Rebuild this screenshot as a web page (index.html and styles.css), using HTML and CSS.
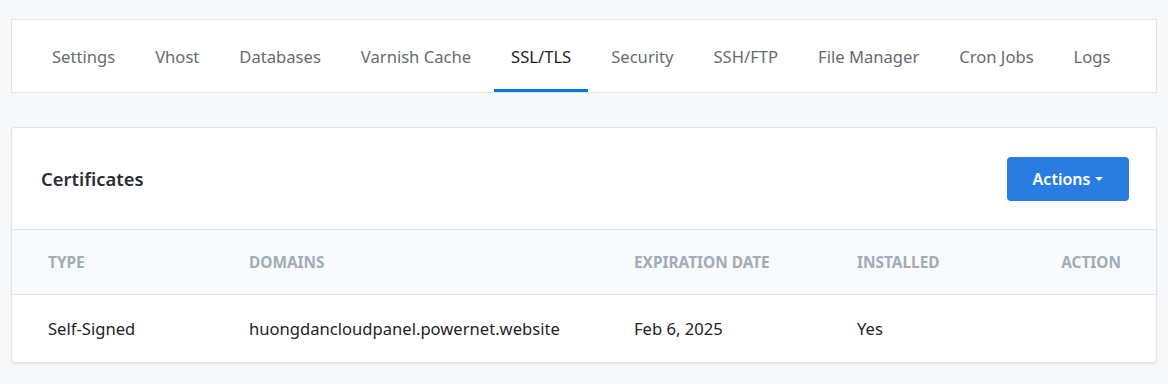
FILE: index.html
```html
<!DOCTYPE html>
<html lang="en">
<head>
    <meta charset="UTF-8">
    <title>Site - SSL/TLS</title>
    <link rel="stylesheet" href="styles.css">
</head>
<body>

    <!-- Site tabs -->
    <nav class="tabs">
        <a class="tab">Settings</a>
        <a class="tab">Vhost</a>
        <a class="tab">Databases</a>
        <a class="tab">Varnish Cache</a>
        <a class="tab active">SSL/TLS</a>
        <a class="tab">Security</a>
        <a class="tab">SSH/FTP</a>
        <a class="tab">File Manager</a>
        <a class="tab">Cron Jobs</a>
        <a class="tab">Logs</a>
    </nav>

    <!-- Certificates card -->
    <div class="card">
        <div class="card-header">
            <h2>Certificates</h2>
            <button class="btn-actions">Actions <span class="caret"></span></button>
        </div>

        <table class="cert-table">
            <colgroup>
                <col style="width: 201px">
                <col style="width: 385px">
                <col style="width: 223px">
                <col style="width: 180px">
                <col>
            </colgroup>
            <thead>
                <tr>
                    <th>Type</th>
                    <th>Domains</th>
                    <th>Expiration Date</th>
                    <th>Installed</th>
                    <th class="right">Action</th>
                </tr>
            </thead>
            <tbody>
                <tr>
                    <td>Self-Signed</td>
                    <td>huongdancloudpanel.powernet.website</td>
                    <td>Feb 6, 2025</td>
                    <td>Yes</td>
                    <td class="right"></td>
                </tr>
            </tbody>
        </table>
    </div>

</body>
</html>
```

FILE: styles.css
```css
/* Global Styles */
* {
    margin: 0;
    padding: 0;
    box-sizing: border-box;
}

body {
    font-family: 'Noto Sans', 'Open Sans', sans-serif;
    background-color: #f7f8fa;
    color: #1f2328;
    padding: 19px 11px;
}

/* Tabs */
.tabs {
    display: flex;
    height: 74px;
    padding-left: 23px;
    background-color: #fff;
    border: 1px solid #e2e4e7;
}

.tab {
    display: block;
    padding: 0 17px;
    margin-right: 6px;
    line-height: 73px;
    font-size: 16.6px;
    color: #676b71;
    border-bottom: 3px solid transparent;
    cursor: pointer;
}

.tab.active {
    color: #1b1d21;
    border-bottom-color: #0078d4;
}

/* Card */
.card {
    margin-top: 34px;
    background-color: #fff;
    border: 1px solid #e2e4e7;
    border-radius: 4px;
    box-shadow: 0 1px 3px rgba(0, 0, 0, 0.08);
    overflow: hidden;
}

.card-header {
    display: flex;
    justify-content: space-between;
    align-items: center;
    height: 101px;
    padding: 0 27px 0 29px;
}

.card-header h2 {
    font-size: 18.4px;
    font-weight: 600;
    color: #2b2e33;
}

.btn-actions {
    display: flex;
    align-items: center;
    justify-content: center;
    width: 122px;
    height: 44px;
    font-family: inherit;
    font-size: 16px;
    font-weight: 600;
    color: #fff;
    background-color: #2a7de0;
    border: none;
    border-radius: 4px;
    cursor: pointer;
}

.caret {
    display: inline-block;
    margin-left: 5px;
    border-top: 4px solid #fff;
    border-left: 4px solid transparent;
    border-right: 4px solid transparent;
}

/* Table */
.cert-table {
    width: 100%;
    table-layout: fixed;
    border-collapse: collapse;
}

.cert-table th {
    height: 65px;
    padding: 0 0 0 36px;
    text-align: left;
    font-size: 15.4px;
    font-weight: 700;
    text-transform: uppercase;
    color: #a2acb6;
    background-color: #f9fafb;
    border-top: 1px solid #e2e4e7;
    border-bottom: 1px solid #e2e4e7;
}

.cert-table td {
    height: 67px;
    padding: 0 0 0 36px;
    font-size: 16.6px;
    color: #1f2328;
}

.cert-table .right {
    text-align: right;
    padding-right: 35px;
}
```
